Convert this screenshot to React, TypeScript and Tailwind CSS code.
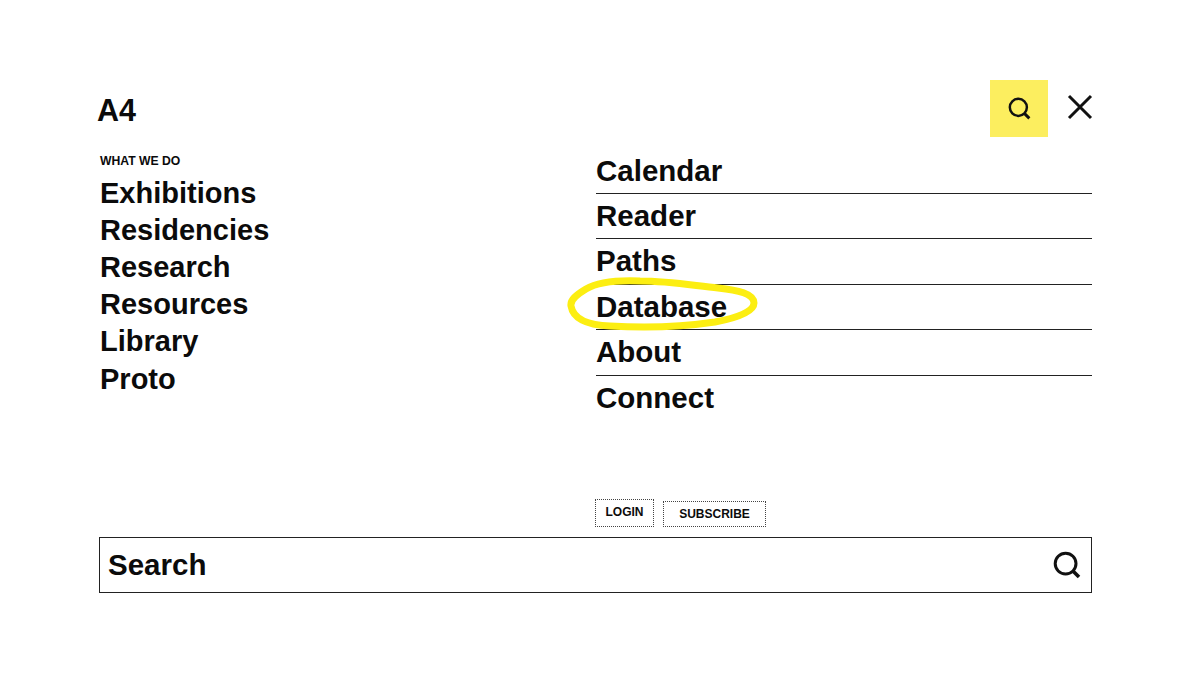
const leftLinks = ['Exhibitions', 'Residencies', 'Research', 'Resources', 'Library', 'Proto'];
const rightLinks = ['Calendar', 'Reader', 'Paths', 'Database', 'About', 'Connect'];

function SearchIcon({ className }: { className: string }) {
  return (
    <svg className={className} viewBox="0 0 28 28" fill="none" stroke="#111" strokeWidth="3">
      <circle cx="12.6" cy="12.6" r="10.4" />
      <path d="M20.2 20.2L26 26" strokeWidth="3.6" />
    </svg>
  );
}

export default function App() {
  return (
    <div className="w-[1200px] h-[689px] bg-white text-[#0b0b0b] font-['Liberation_Sans',Arial,sans-serif] font-bold overflow-hidden pt-[80px] pl-[99px]">
      {/* top bar */}
      <div className="w-[993px] h-[57px] flex items-center justify-between">
        <div className="text-[30.5px] leading-none -ml-[2px] mt-[3px]">A4</div>
        <div className="flex items-center">
          <button className="w-[58px] h-[57px] bg-[#fcee5f] flex items-center justify-center">
            <SearchIcon className="w-[23px] h-[23px] -mt-[1px]" />
          </button>
          <svg className="w-[26px] h-[26px] ml-[19px] -mr-[1px] -mt-[3px]" viewBox="0 0 26 26" stroke="#111" strokeWidth="3">
            <path d="M2 2L24 24M24 2L2 24" />
          </svg>
        </div>
      </div>

      <div className="w-[993px] flex mt-[-4px]">
        {/* what we do */}
        <div className="w-[497px] pt-[19.5px] pl-[1px]">
          <div className="text-[12.2px] leading-[16px]">WHAT WE DO</div>
          <ul className="mt-[6px]">
            {leftLinks.map(l => (
              <li key={l} className="text-[29px] leading-[37.2px]">{l}</li>
            ))}
          </ul>
        </div>

        {/* main links */}
        <div className="flex-1">
          <ul className="pt-[15.7px]">
            {rightLinks.map((l, i) => (
              <li key={l} className={`relative h-[45.4px] text-[29.5px] leading-[44px] ${i < 5 ? 'border-b border-[#222]' : ''}`}>
                {l}
                {l === 'Database' && (
                  <svg className="absolute left-[-30px] top-[-9px] w-[194px] h-[56px] pointer-events-none" viewBox="0 0 194 56" fill="none">
                    <path
                      d="M74 5C50 4 30 7 20 13C10 19 4 24 5 30C7 42 20 49 44 50C75 52 115 51 149 46C170 42 188 36 188 27C188 18 172 14 152 12C130 10 105 5 74 5Z"
                      stroke="#fcee12"
                      strokeWidth="7"
                      strokeLinecap="round"
                    />
                  </svg>
                )}
              </li>
            ))}
          </ul>
          <div className="flex items-start gap-[9px] mt-[78.3px] -ml-[1px] text-[12px] leading-none">
            <button className="w-[59px] h-[28px] border border-dotted border-[#444] pb-[2px]">LOGIN</button>
            <button className="w-[103px] h-[26px] mt-[2px] border border-dotted border-[#444]">SUBSCRIBE</button>
          </div>
        </div>
      </div>

      {/* search */}
      <div className="w-[993px] h-[56px] mt-[10px] border border-[#222] flex items-center justify-between pl-[8px] pr-[10px]">
        <span className="text-[29.5px]">Search</span>
        <SearchIcon className="w-[28px] h-[28px]" />
      </div>
    </div>
  );
}
